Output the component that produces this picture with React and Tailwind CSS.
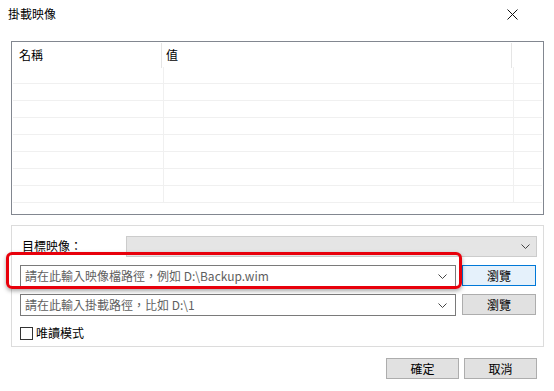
import React from 'react';

const font = { fontFamily: '"Noto Sans CJK TC", "Liberation Sans", sans-serif' };

const Chevron = () => (
  <svg width="9" height="5" viewBox="0 0 9 5" className="shrink-0">
    <path d="M0.5 0.5 L4.5 4.5 L8.5 0.5" fill="none" stroke="#444" strokeWidth="1" />
  </svg>
);

const PathInput = ({ text }) => (
  <div className="flex items-center h-[22px] w-[436px] border border-[#7a7a7a] bg-white pl-[4px] pr-[8px]">
    <span className="flex-1 text-[12px] text-[#5f5f5f] leading-[16px] whitespace-nowrap">{text}</span>
    <Chevron />
  </div>
);

const App = () => {
  const rows = Array.from({ length: 8 });

  return (
    <div className="w-[554px] h-[391px] bg-white text-black relative overflow-hidden" style={font}>
      {/* title */}
      <div className="flex items-center justify-between h-[28px] pl-[8px] pr-[36px]">
        <span className="text-[12px] leading-[16px]">掛載映像</span>
        <svg width="11" height="11" viewBox="0 0 11 11">
          <path d="M0.5 0.5 L10.5 10.5 M10.5 0.5 L0.5 10.5" stroke="#111" strokeWidth="1" />
        </svg>
      </div>

      {/* list */}
      <div className="ml-[11px] mt-[13px] w-[533px] h-[174px] border border-[#828790] bg-white">
        <div className="flex h-[25px] text-[12px] items-center">
          <div className="w-[150px] h-full flex items-center pl-[7px] border-r border-[#e5e5e5] mt-[1px]">名稱</div>
          <div className="w-[350px] h-full flex items-center pl-[4px] border-r border-[#e5e5e5] mt-[1px]">值</div>
        </div>
        {rows.map((_, i) => (
          <div key={i} className="flex h-[17px] border-b border-[#f0f0f0] ml-[1px] mr-[1px]">
            <div className="w-[151px] border-r border-[#f0f0f0]" />
            <div className="w-[350px] border-r border-[#f0f0f0]" />
          </div>
        ))}
      </div>

      {/* options group */}
      <div className="ml-[11px] mt-[10px] w-[533px] h-[122px] border border-[#dcdcdc] pl-[8px] pr-[6px]">
        <div className="flex items-center mt-[10px]">
          <span className="w-[106px] pl-[2px] text-[12px] leading-[16px] -mt-[2px]">目標映像：</span>
          <div className="flex-1 h-[21px] bg-[#e5e5e5] border border-[#cccccc] flex items-center justify-end pr-[6px]">
            <Chevron />
          </div>
        </div>

        <div className="relative flex items-center mt-[8px]">
          <PathInput text="請在此輸入映像檔路徑，例如 D:\Backup.wim" />
          <button className="ml-[6px] w-[74px] h-[21px] -mt-[1px] bg-[#e5f1fb] border border-[#0078d7] text-[12px] leading-[16px]">
            瀏覽
          </button>
          <div className="absolute -left-[14px] -top-[13px] w-[456px] h-[37px] rounded-[6px] border-[3px] border-[#e8000b] shadow-[0_2px_4px_rgba(0,0,0,0.35)] pointer-events-none" />
        </div>

        <div className="flex items-center mt-[7px]">
          <PathInput text="請在此輸入掛載路徑，比如 D:\1" />
          <button className="ml-[6px] w-[74px] h-[21px] -mt-[1px] bg-[#e1e1e1] border border-[#adadad] text-[12px] leading-[16px]">
            瀏覽
          </button>
        </div>

        <div className="flex items-center mt-[9px]">
          <div className="w-[13px] h-[13px] border border-[#333] bg-white" />
          <span className="ml-[3px] text-[12px] leading-[16px]">唯讀模式</span>
        </div>
      </div>

      {/* footer */}
      <div className="flex justify-end gap-[5px] mt-[11px] pr-[17px]">
        <button className="w-[73px] h-[21px] bg-[#e1e1e1] border border-[#adadad] text-[12px] leading-[16px]">確定</button>
        <button className="w-[73px] h-[21px] bg-[#e1e1e1] border border-[#adadad] text-[12px] leading-[16px]">取消</button>
      </div>
    </div>
  );
};

export default App;
